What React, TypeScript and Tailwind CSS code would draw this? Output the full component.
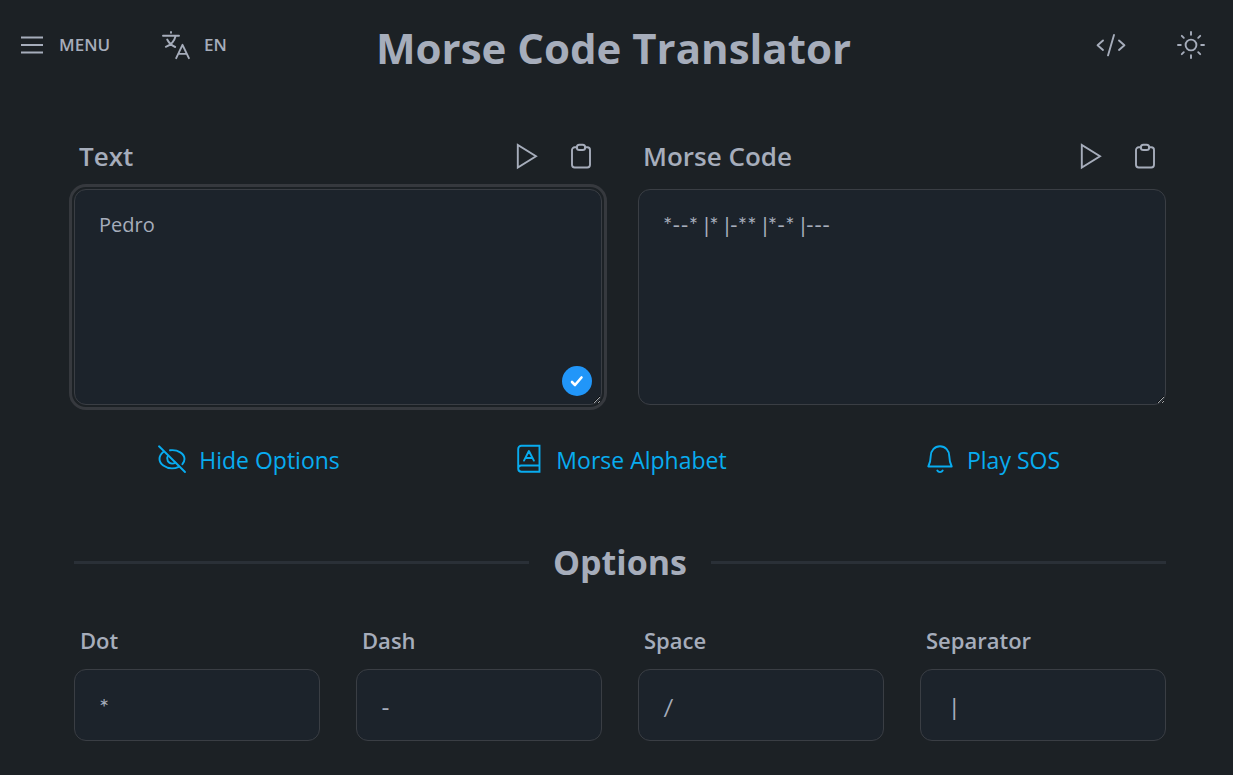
import { useState } from 'react';
import type { ReactNode } from 'react';

function Icon({ width = 1.9, children }: { width?: number; children: ReactNode }) {
  return (
    <svg
      viewBox="0 0 32 32"
      className="size-8 shrink-0"
      fill="none"
      stroke="currentColor"
      strokeWidth={width}
      strokeLinecap="round"
      strokeLinejoin="round"
      aria-hidden="true"
    >
      {children}
    </svg>
  );
}

const MenuIcon = () => (
  <svg viewBox="0 0 24 24" className="size-6 shrink-0" stroke="currentColor" strokeWidth={1.8} aria-hidden="true">
    <path d="M1 4.5h22M1 12h22M1 19.5h22" />
  </svg>
);

const LanguageIcon = () => (
  <Icon>
    <path d="M3 6.7h16M11 2.9v.8M15.600 7c-1.200 5.200-4.600 9-9.800 10.800M7.200 10.500c1.600 3.200 4.300 6 8 7.500" />
    <path d="M16.200 29.200 22.500 15.800l6.400 13.400M18.300 24.900h8.400" />
  </Icon>
);

const CodeIcon = () => (
  <Icon>
    <path d="M8 11.500 2.600 16.300 8 21M24 11.500l5.400 4.800L24 21M19 6l-6 20.400" />
  </Icon>
);

const SunIcon = () => (
  <Icon>
    <circle cx="16" cy="16" r="5.400" />
    <path d="M16 3v2.800M16 26.200V29M3 16h2.800M26.200 16H29M6.800 6.800l2 2M23.200 23.200l2 2M6.800 25.200l2-2M23.200 8.800l2-2" />
  </Icon>
);

const PlayIcon = () => (
  <Icon>
    <path d="M6.800 5v22.600L25 16.300z" strokeLinejoin="miter" />
  </Icon>
);

const ClipboardIcon = () => (
  <Icon>
    <path d="M12 7.300H9.700A2.700 2.700 0 0 0 7 10v14.800a2.700 2.700 0 0 0 2.700 2.700h12.600a2.700 2.700 0 0 0 2.700-2.700V10a2.700 2.700 0 0 0-2.700-2.700H20" />
    <rect x="11.800" y="4.800" width="8.400" height="5.200" rx="2.600" />
  </Icon>
);

const EyeOffIcon = () => (
  <Icon>
    <path d="M3 3.300 29 29" />
    <path d="M7.600 8.800C5.200 10.600 3.500 13.300 3.500 16c0 5 6 9.400 12.500 9.400 2.400 0 4.700-.6 6.700-1.600" />
    <path d="M14 7.300c8-1 14.500 3.600 14.500 8.700 0 2-.8 3.700-2.100 5.200" />
    <path d="M11.900 12.800c-2.200 3.600.4 7.800 4.300 7.800 1.200 0 2.300-.4 3.200-1.100" />
  </Icon>
);

const BookIcon = () => (
  <Icon>
    <path
      d="M26.500 22.500v6.200H8.300A3.200 3.200 0 0 1 5.200 25.600V6a3.200 3.200 0 0 1 3.200-3.200h18.100v19.700H8.300a3.100 3.100 0 0 0-3.100 3.100"
      strokeLinejoin="miter"
    />
    <path d="M11 17.600 15.900 8l5 9.600M12.600 15h6.700" />
  </Icon>
);

const BellIcon = () => (
  <Icon>
    <path d="M4.300 23.500h23.400c-1.600-3.500-2.400-6.700-2.400-10.300 0-5.800-4-10-9.300-10s-9.300 4.200-9.300 10c0 3.600-.8 6.800-2.400 10.300z" />
    <path d="M13.300 27.600c1.200 2 4.200 2 5.400 0" />
  </Icon>
);

const options = [
  { id: 'dot', label: 'Dot', value: '*' },
  { id: 'dash', label: 'Dash', value: '-' },
  { id: 'space', label: 'Space', value: '/' },
  { id: 'separator', label: 'Separator', value: ' |' },
];

const links = [
  { label: 'Hide Options', icon: <EyeOffIcon /> },
  { label: 'Morse Alphabet', icon: <BookIcon /> },
  { label: 'Play SOS', icon: <BellIcon /> },
];

type PanelProps = {
  id: string;
  label: string;
  initial: string;
  textClass: string;
  active?: boolean;
};

function Panel({ id, label, initial, textClass, active }: PanelProps) {
  const [value, setValue] = useState(initial);

  return (
    <div>
      <div className="flex h-11 items-center justify-between px-[5px]">
        <label htmlFor={id} className="text-[26px] font-semibold">
          {label}
        </label>
        <div className="flex gap-[22px]">
          <button type="button" aria-label={`Play ${label}`}>
            <PlayIcon />
          </button>
          <button type="button" aria-label={`Copy ${label}`}>
            <ClipboardIcon />
          </button>
        </div>
      </div>
      <div className="relative mt-[11px]">
        <textarea
          id={id}
          value={value}
          spellCheck={false}
          onChange={(e) => setValue(e.target.value)}
          className={`block h-54 w-full rounded-xl border border-[#3a3e44] bg-[#1c232b] px-6 py-[19px] leading-8 outline-[#36393e] ${textClass} ${
            active ? 'outline-3 outline-offset-2' : 'focus:outline-3 focus:outline-offset-2'
          }`}
        />
        {active && (
          <span className="absolute right-2.5 bottom-[9px] flex size-[30px] items-center justify-center rounded-full bg-[#2196f9] text-white">
            <svg viewBox="0 0 14 14" className="size-3.5" fill="none" stroke="currentColor" strokeWidth={2.6} aria-hidden="true">
              <path d="m2 8 3 3 6.500-7.500" strokeLinecap="round" strokeLinejoin="round" />
            </svg>
          </span>
        )}
      </div>
    </div>
  );
}

export default function App() {
  return (
    <div className="min-h-screen bg-[#1c2125] font-['Open_Sans','Noto_Sans',sans-serif] text-[#a6adbb] scheme-dark">
      <header className="grid h-[90px] grid-cols-[1fr_auto_1fr] items-center pr-[26px] pl-5">
        <nav className="flex items-center gap-[50px] text-[17px] font-semibold">
          <button type="button" className="flex items-center gap-[15px]">
            <MenuIcon />
            MENU
          </button>
          <button type="button" className="flex items-center gap-3">
            <LanguageIcon />
            EN
          </button>
        </nav>
        <h1 className="pt-1 text-[42px] font-bold">Morse Code Translator</h1>
        <div className="flex items-center justify-end gap-12">
          <a href="#source" aria-label="Source code">
            <CodeIcon />
          </a>
          <button type="button" aria-label="Toggle theme">
            <SunIcon />
          </button>
        </div>
      </header>

      <main className="pt-11 pr-[67px] pb-8 pl-[74px]">
        <div className="grid grid-cols-2 gap-9">
          <Panel id="text" label="Text" initial="Pedro" textClass="text-xl" active />
          <Panel
            id="morse"
            label="Morse Code"
            initial="*--* |* |-** |*-* |---"
            textClass="font-['Lato','Open_Sans',sans-serif] text-[22px]"
          />
        </div>

        <div className="mt-[38px] grid grid-cols-3 gap-6 text-[23px] leading-8 text-[#08acf0]">
          {links.map((link) => (
            <button key={link.label} type="button" className="flex justify-center gap-[11px]">
              {link.icon}
              <span className="pt-px">{link.label}</span>
            </button>
          ))}
        </div>

        <div className="mt-[66px] flex items-center gap-6">
          <div className="h-[3px] flex-1 bg-[#2a3037]" />
          <h2 className="text-[34px] leading-10 font-bold">Options</h2>
          <div className="h-[3px] flex-1 bg-[#2a3037]" />
        </div>

        <div className="mt-[42px] grid grid-cols-4 gap-9">
          {options.map((option) => (
            <div key={option.id}>
              <label htmlFor={option.id} className="block px-1.5 text-[22px] leading-8 font-semibold">
                {option.label}
              </label>
              <input
                id={option.id}
                type="text"
                defaultValue={option.value}
                className="mt-[13px] block h-18 w-full rounded-xl border border-[#3a3e44] bg-[#1c232b] px-6 pt-0.5 font-['Lato','Open_Sans',sans-serif] text-2xl outline-none"
              />
            </div>
          ))}
        </div>
      </main>
    </div>
  );
}
